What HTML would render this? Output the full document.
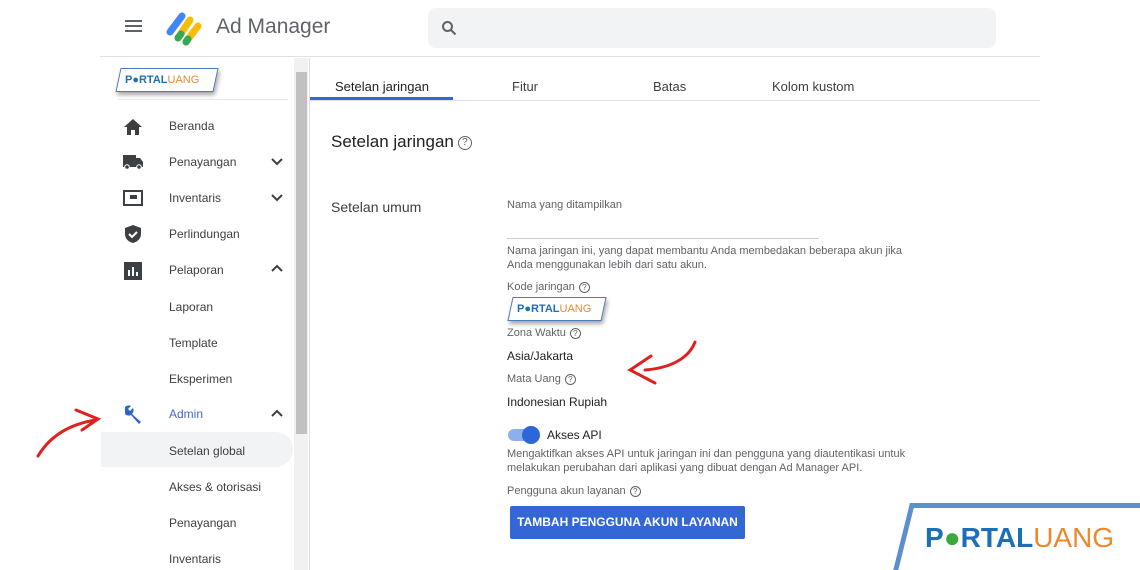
<!DOCTYPE html>
<html><head><meta charset="utf-8"><style>
*{margin:0;padding:0;box-sizing:border-box}
html,body{width:1140px;height:570px;overflow:hidden}
body{background:#fff;font-family:"Liberation Sans",sans-serif;position:relative;color:#3c4043}
.a{position:absolute}
.nav{font-size:12px;color:#3c4043}
.lbl{font-size:11px;color:#5f6368}
.q{display:inline-block;width:11px;height:11px;border:1px solid #5f6368;border-radius:50%;font-size:8px;text-align:center;line-height:9px;color:#5f6368;vertical-align:middle;margin-left:4px}
.logo{background:#fff;border:1px solid #4a7cc0;transform:skewX(-12deg);box-shadow:2px 3px 4px rgba(0,0,0,.35);font-weight:bold}
.logo span{display:inline-block;transform:skewX(12deg)}
.b{color:#1c6fb7}.o{color:#e98a2c;font-weight:normal}
</style></head><body>
<div class="a" style="left:125px;top:20px;width:17px;height:2px;background:#5f6368;box-shadow:0 5px 0 #5f6368,0 10px 0 #5f6368"></div>
<svg class="a" style="left:164px;top:10px" width="40" height="36" viewBox="0 0 40 36">
<g stroke-linecap="round" stroke-width="7"><line x1="6" y1="22" x2="18" y2="6" stroke="#4285f4"/><line x1="14" y1="28" x2="26" y2="10" stroke="#fbbc04"/><line x1="22" y1="32" x2="34" y2="16" stroke="#fbbc04"/><line x1="14" y1="28" x2="17" y2="24" stroke="#34a853"/><line x1="22" y1="32" x2="24" y2="29" stroke="#34a853"/></g></svg>
<div class="a" style="left:216px;top:15px;font-size:21px;color:#5f6368">Ad Manager</div>
<div class="a" style="left:428px;top:8px;width:568px;height:40px;background:#f1f3f4;border-radius:8px"></div>
<svg class="a" style="left:441px;top:20px" width="16" height="16" viewBox="0 0 16 16"><circle cx="6.5" cy="6.5" r="4.5" fill="none" stroke="#5f6368" stroke-width="2"/><line x1="10" y1="10" x2="14.5" y2="14.5" stroke="#5f6368" stroke-width="2"/></svg>
<div class="a" style="left:100px;top:56px;width:940px;height:1px;background:#e0e0e0"></div>
<div class="a logo" style="left:118px;top:68px;width:98px;height:24px;font-size:11px;line-height:22px;padding-left:6px"><span><b class="b">P●RTAL</b><b class="o">UANG</b></span></div>
<div class="a" style="left:118px;top:99px;width:170px;height:1px;background:#e8e8e8"></div>
<div class="a" style="left:294px;top:58px;width:14px;height:512px;background:#f1f1f1"></div>
<div class="a" style="left:296px;top:72px;width:11px;height:362px;background:#c1c1c1"></div>
<div class="a" style="left:309px;top:58px;width:1px;height:512px;background:#e0e0e0"></div>
<svg class="a" style="left:123px;top:118px" width="20" height="18" viewBox="0 0 20 18"><path d="M10 1L1 9h3v8h4v-5h4v5h4V9h3z" fill="#3c4043"/></svg>
<svg class="a" style="left:122px;top:154px" width="22" height="16" viewBox="0 0 22 16"><path d="M1 1h13v3h4l3 4v5h-20z" fill="#3c4043"/><circle cx="5" cy="13" r="2.3" fill="#3c4043" stroke="#fff"/><circle cx="17" cy="13" r="2.3" fill="#3c4043" stroke="#fff"/></svg>
<svg class="a" style="left:123px;top:190px" width="20" height="16" viewBox="0 0 20 16"><rect x="1" y="1" width="18" height="14" fill="none" stroke="#3c4043" stroke-width="2"/><rect x="7" y="5" width="7" height="4" fill="#3c4043"/></svg>
<svg class="a" style="left:124px;top:224px" width="18" height="20" viewBox="0 0 18 20"><path d="M9 1L1 4v6c0 5 4 8 8 9 4-1 8-4 8-9V4z" fill="#3c4043"/><path d="M5 10l3 3 5-5" stroke="#fff" stroke-width="2" fill="none"/></svg>
<svg class="a" style="left:124px;top:262px" width="18" height="18" viewBox="0 0 18 18"><rect width="18" height="18" fill="#3c4043"/><rect x="4" y="8" width="2" height="6" fill="#fff"/><rect x="8" y="5" width="2" height="9" fill="#fff"/><rect x="12" y="10" width="2" height="4" fill="#fff"/></svg>
<svg class="a" style="left:122px;top:404px" width="22" height="20" viewBox="0 0 22 20"><path d="M3 3a5 5 0 0 1 6-1L6 5l2 2 3-3a5 5 0 0 1-1 6l9 8-2 2-8-9a5 5 0 0 1-6-1z" fill="#2f64c8"/></svg>
<div class="a nav" style="left:169px;top:119px">Beranda</div>
<div class="a nav" style="left:169px;top:155px">Penayangan</div>
<div class="a nav" style="left:169px;top:191px">Inventaris</div>
<div class="a nav" style="left:169px;top:227px">Perlindungan</div>
<div class="a nav" style="left:169px;top:263px">Pelaporan</div>
<div class="a nav" style="left:169px;top:300px">Laporan</div>
<div class="a nav" style="left:169px;top:336px">Template</div>
<div class="a nav" style="left:169px;top:372px">Eksperimen</div>
<div class="a nav" style="left:169px;top:407px;color:#4a63c8">Admin</div>
<div class="a" style="left:101px;top:432px;width:192px;height:35px;background:#f1f3f4;border-radius:0 18px 18px 0"></div>
<div class="a nav" style="left:169px;top:444px">Setelan global</div>
<div class="a nav" style="left:169px;top:480px">Akses &amp; otorisasi</div>
<div class="a nav" style="left:169px;top:516px">Penayangan</div>
<div class="a nav" style="left:169px;top:552px">Inventaris</div>
<svg class="a" style="left:268px;top:154px" width="18" height="130" viewBox="0 0 18 130" fill="none" stroke="#3c4043" stroke-width="2"><path d="M4 5l5 5 5-5"/><path d="M4 41l5 5 5-5"/><path d="M4 117l5-5 5 5"/></svg>
<svg class="a" style="left:268px;top:406px" width="18" height="14" viewBox="0 0 18 14" fill="none" stroke="#3c4043" stroke-width="2"><path d="M4 10l5-5 5 5"/></svg>
<svg class="a" style="left:30px;top:400px" width="75" height="65" viewBox="0 0 75 65" fill="none" stroke="#e02020" stroke-width="3" stroke-linecap="round"><path d="M8 56C20 36 40 24 66 20"/><path d="M46 10L68 19 52 30"/></svg>
<div class="a" style="left:335px;top:79px;font-size:13px;color:#202124">Setelan jaringan</div>
<div class="a" style="left:310px;top:97px;width:143px;height:3px;background:#3367d6"></div>
<div class="a" style="left:512px;top:79px;font-size:13px;color:#3c4043">Fitur</div>
<div class="a" style="left:653px;top:79px;font-size:13px;color:#3c4043">Batas</div>
<div class="a" style="left:772px;top:79px;font-size:13px;color:#3c4043">Kolom kustom</div>
<div class="a" style="left:310px;top:100px;width:730px;height:1px;background:#e0e0e0"></div>
<div class="a" style="left:331px;top:132px;font-size:17px;color:#202124">Setelan jaringan<span class="q" style="width:14px;height:14px;font-size:10px;line-height:12px">?</span></div>
<div class="a" style="left:331px;top:199px;font-size:14px;color:#3c4043">Setelan umum</div>
<div class="a lbl" style="left:507px;top:199px">Nama yang ditampilkan</div>
<div class="a" style="left:507px;top:238px;width:312px;height:1px;background:#ccc"></div>
<div class="a lbl" style="left:507px;top:244px;line-height:14px">Nama jaringan ini, yang dapat membantu Anda membedakan beberapa akun jika<br>Anda menggunakan lebih dari satu akun.</div>
<div class="a lbl" style="left:507px;top:281px">Kode jaringan<span class="q">?</span></div>
<div class="a logo" style="left:510px;top:297px;width:94px;height:24px;font-size:11px;line-height:22px;padding-left:6px"><span><b class="b">P●RTAL</b><b class="o">UANG</b></span></div>
<div class="a lbl" style="left:507px;top:327px">Zona Waktu<span class="q">?</span></div>
<div class="a" style="left:507px;top:349px;font-size:12px;color:#202124">Asia/Jakarta</div>
<div class="a lbl" style="left:507px;top:373px">Mata Uang<span class="q">?</span></div>
<div class="a" style="left:507px;top:395px;font-size:12px;color:#202124">Indonesian Rupiah</div>
<svg class="a" style="left:625px;top:338px" width="75" height="50" viewBox="0 0 75 50" fill="none" stroke="#e02020" stroke-width="3" stroke-linecap="round"><path d="M70 4C64 20 46 30 20 32"/><path d="M26 18L5 32 30 45"/></svg>
<div class="a" style="left:508px;top:429px;width:28px;height:12px;border-radius:6px;background:#8ab0ee"></div>
<div class="a" style="left:522px;top:426px;width:18px;height:18px;border-radius:50%;background:#2c66d8"></div>
<div class="a" style="left:547px;top:428px;font-size:12px;color:#202124">Akses API</div>
<div class="a lbl" style="left:507px;top:447px;line-height:14px">Mengaktifkan akses API untuk jaringan ini dan pengguna yang diautentikasi untuk<br>melakukan perubahan dari aplikasi yang dibuat dengan Ad Manager API.</div>
<div class="a lbl" style="left:507px;top:485px">Pengguna akun layanan<span class="q">?</span></div>
<div class="a" style="left:510px;top:506px;width:235px;height:33px;background:#3367d6;color:#fff;font-size:12px;font-weight:bold;text-align:center;line-height:33px;border-radius:2px">TAMBAH PENGGUNA AKUN LAYANAN</div>
<div class="a" style="left:910px;top:503px;width:250px;height:67px;background:#fff;border-top:5px solid #5b8fd0;border-left:5px solid #5b8fd0;transform:skewX(-14deg);transform-origin:0 0"></div>
<div class="a" style="left:925px;top:522px;font-size:28px;font-weight:bold;white-space:nowrap"><span class="b">P<span style="color:#3aa83a">●</span>RTAL</span><span class="o">UANG</span></div>
</body></html>
